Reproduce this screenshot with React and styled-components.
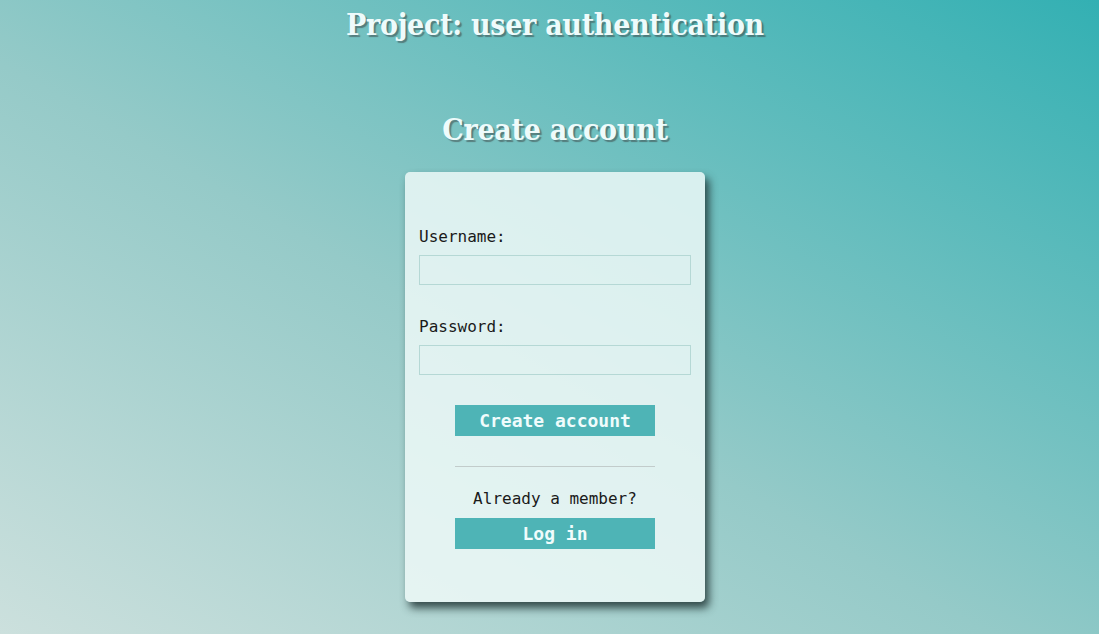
import styled, { createGlobalStyle } from "styled-components";

const GlobalStyle = createGlobalStyle`
    html, body {
        margin: 0;
        padding: 0;
        height: 100%;
    }
    body {
        background: linear-gradient(to top right, #cce0dd 0%, #95cac8 45%, #33b0b3 100%);
        background-attachment: fixed;
        min-height: 100vh;
    }
`

const Wrapper = styled.div`
    min-height: 100vh;
    display: flex;
    flex-direction: column;
    align-items: center;
    padding-left: 11px;
    box-sizing: border-box;
`

const Heading = styled.h1`
    margin: ${(p) => p.$margin || "0"};
    font-family: "DejaVu Serif Condensed", "DejaVu Serif", serif;
    font-weight: bold;
    font-size: ${(p) => p.$size || "30px"};
    line-height: 46px;
    color: #eefbfb;
    text-shadow: 2px 2px 1px rgba(60, 70, 70, 0.55);
    letter-spacing: -0.3px;
`

const Card = styled.form`
    width: 300px;
    height: 430px;
    box-sizing: border-box;
    padding: 55px 14px 0;
    border-radius: 5px;
    background: rgba(240, 250, 249, 0.82);
    box-shadow: 4px 6px 9px rgba(30, 50, 50, 0.85);
    display: flex;
    flex-direction: column;
    font-family: "DejaVu Sans Mono", "Liberation Mono", monospace;
`

const Field = styled.label`
    display: flex;
    flex-direction: column;
    gap: 9px;
    font-size: 16px;
    color: #1a1a1a;
    margin-bottom: 32px;
`

const Input = styled.input`
    height: 30px;
    box-sizing: border-box;
    border: 1px solid #b5d8d5;
    background: transparent;
    outline: none;
    padding: 0 6px;
    font-family: inherit;
`

const Actions = styled.div`
    display: flex;
    flex-direction: column;
    align-items: center;
    margin-top: ${(p) => p.$top || "0"};
`

const Button = styled.button`
    width: 200px;
    height: 31px;
    border: none;
    background: #4eb4b6;
    color: #f0fcfc;
    font-family: "DejaVu Sans Mono", "Liberation Mono", monospace;
    font-weight: bold;
    font-size: 18px;
    cursor: pointer;
`

const Divider = styled.hr`
    width: 200px;
    margin: 30px 0 0;
    border: none;
    border-top: 1px solid #c2cccb;
`

const Note = styled.p`
    margin: 22px 0 10px;
    font-size: 16px;
    color: #1a1a1a;
`

const App = () => {
    return (
        <>
            <GlobalStyle />
            <Wrapper>
                <Heading $margin="2px 0 0">Project: user authentication</Heading>
                <Heading $margin="59px 0 19px">Create account</Heading>
                <Card onSubmit={(e) => e.preventDefault()}>
                    <Field>
                        Username:
                        <Input type="text" />
                    </Field>
                    <Field>
                        Password:
                        <Input type="password" />
                    </Field>
                    <Actions $top="-2px">
                        <Button type="submit">Create account</Button>
                        <Divider />
                        <Note>Already a member?</Note>
                        <Button type="button">Log in</Button>
                    </Actions>
                </Card>
            </Wrapper>
        </>
    );
}

export default App;
